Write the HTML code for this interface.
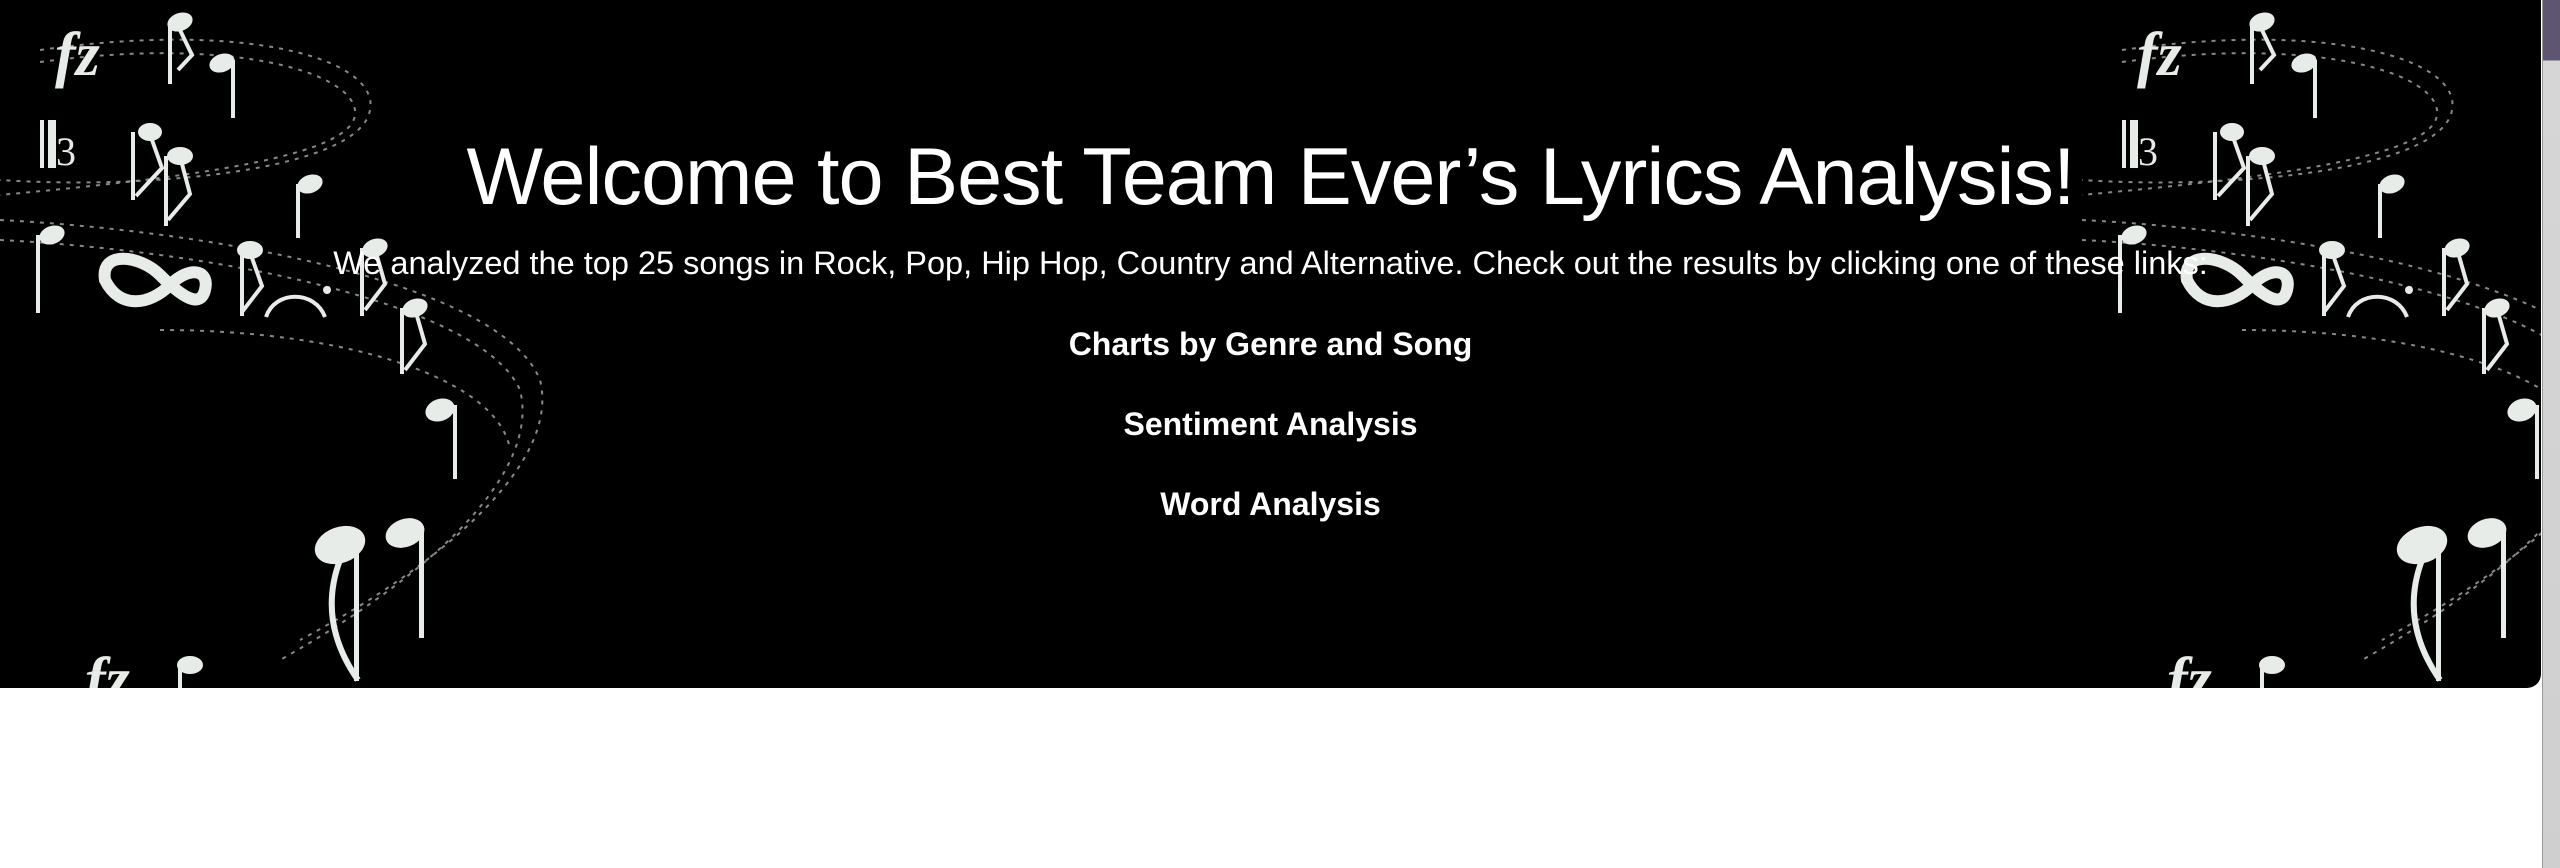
<!DOCTYPE html>
<html><head><meta charset="utf-8"><style>
html,body{margin:0;padding:0;width:2560px;height:868px;background:#fff;overflow:hidden}
.box{position:absolute;left:0;top:0;width:2541px;height:688px;background:#000;border-radius:0 0 14px 0;overflow:hidden}
svg{position:absolute;left:0;top:0}
.t{position:absolute;left:0;width:2541px;text-align:center;color:#fff;font-family:"Liberation Sans",sans-serif;white-space:nowrap}
.strip{position:absolute;left:2542px;top:0;width:18px;height:868px;background:linear-gradient(#5e5670 0,#5e5670 60px,#d6d6d6 61px,#cfcfcf 868px);border-left:1px solid #999}
</style></head><body>
<div class="box">
<svg width="2541" height="688">
<defs>
<g id="n" fill="#e8ece8" stroke="none">
<g fill="none" stroke="#888" stroke-width="2" stroke-dasharray="4 6">
<path d="M40 50 C250 20 380 60 370 110 C360 170 150 190 0 180"/>
<path d="M40 62 C240 35 360 75 355 115 C350 160 160 180 0 195"/>
<path d="M0 220 C200 230 500 280 540 380 C560 460 450 560 300 640"/>
<path d="M0 240 C200 250 480 300 520 390 C540 470 440 570 280 660"/>
<path d="M160 330 C350 330 500 380 510 450"/>
</g>
<text x="55" y="75" font-family="Liberation Serif,serif" font-style="italic" font-weight="bold" font-size="62">fz</text>
<ellipse cx="180" cy="22" rx="13" ry="9" transform="rotate(-20 180 22)"/><rect x="168" y="22" width="4" height="62"/><path d="M180 30 l12 25 -14 15" stroke="#e8ece8" stroke-width="4" fill="none"/>
<ellipse cx="222" cy="63" rx="13" ry="9" transform="rotate(-20 222 63)"/><rect x="231" y="60" width="4" height="58"/>
<rect x="40" y="120" width="4" height="48"/><rect x="48" y="120" width="8" height="48"/><text x="56" y="165" font-family="Liberation Serif,serif" font-size="40">3</text>
<ellipse cx="150" cy="132" rx="12" ry="9"/><rect x="131" y="132" width="4" height="68"/><path d="M152 140 l10 28 -26 28" stroke="#e8ece8" stroke-width="4" fill="none"/>
<ellipse cx="180" cy="156" rx="13" ry="9"/><rect x="164" y="156" width="4" height="70"/><path d="M182 164 l8 30 -22 26" stroke="#e8ece8" stroke-width="4" fill="none"/>
<ellipse cx="310" cy="184" rx="13" ry="9" transform="rotate(-20 310 184)"/><rect x="296" y="184" width="4" height="54"/>
<ellipse cx="52" cy="235" rx="13" ry="9" transform="rotate(-20 52 235)"/><rect x="36" y="235" width="4" height="78"/>
<path d="M105 280 C100 250 140 255 160 275 C180 295 200 310 205 290 C210 270 190 265 170 285 C150 305 120 310 105 280Z" fill="none" stroke="#e8ece8" stroke-width="12"/>
<ellipse cx="250" cy="250" rx="13" ry="9"/><rect x="240" y="250" width="4" height="66"/><path d="M252 258 l10 28 -20 26" stroke="#e8ece8" stroke-width="4" fill="none"/>
<path d="M266 317 C275 290 315 290 325 317" stroke="#e8ece8" stroke-width="4" fill="none"/><circle cx="327" cy="290" r="4"/>
<ellipse cx="375" cy="248" rx="13" ry="9" transform="rotate(-20 375 248)"/><rect x="360" y="248" width="4" height="68"/><path d="M377 256 l8 28 -20 26" stroke="#e8ece8" stroke-width="4" fill="none"/>
<ellipse cx="415" cy="308" rx="13" ry="9" transform="rotate(-20 415 308)"/><rect x="400" y="308" width="4" height="66"/><path d="M417 316 l8 28 -20 26" stroke="#e8ece8" stroke-width="4" fill="none"/>
<ellipse cx="440" cy="410" rx="15" ry="11" transform="rotate(-20 440 410)"/><rect x="453" y="405" width="4" height="74"/>
<ellipse cx="340" cy="545" rx="26" ry="18" transform="rotate(-20 340 545)"/><rect x="354" y="545" width="5" height="136"/><path d="M340 560 C325 600 330 640 358 680" stroke="#e8ece8" stroke-width="6" fill="none"/>
<ellipse cx="405" cy="533" rx="20" ry="14" transform="rotate(-20 405 533)"/><rect x="419" y="528" width="5" height="110"/>
<text x="85" y="700" font-family="Liberation Serif,serif" font-style="italic" font-weight="bold" font-size="62">fz</text>
<ellipse cx="190" cy="665" rx="13" ry="9"/><rect x="178" y="665" width="4" height="30"/>
</g>
</defs>
<use href="#n"/>
<use href="#n" x="2082"/>
</svg>
<div class="t" style="top:131px;font-size:81px;letter-spacing:-1px">Welcome to Best Team Ever’s Lyrics Analysis!</div>
<div class="t" style="top:245px;font-size:32.5px">We analyzed the top 25 songs in Rock, Pop, Hip Hop, Country and Alternative. Check out the results by clicking one of these links:</div>
<div class="t" style="top:326px;font-size:32px;font-weight:bold">Charts by Genre and Song</div>
<div class="t" style="top:406px;font-size:32px;font-weight:bold">Sentiment Analysis</div>
<div class="t" style="top:486px;font-size:32px;font-weight:bold">Word Analysis</div>
</div>
<div class="strip"></div>
</body></html>
